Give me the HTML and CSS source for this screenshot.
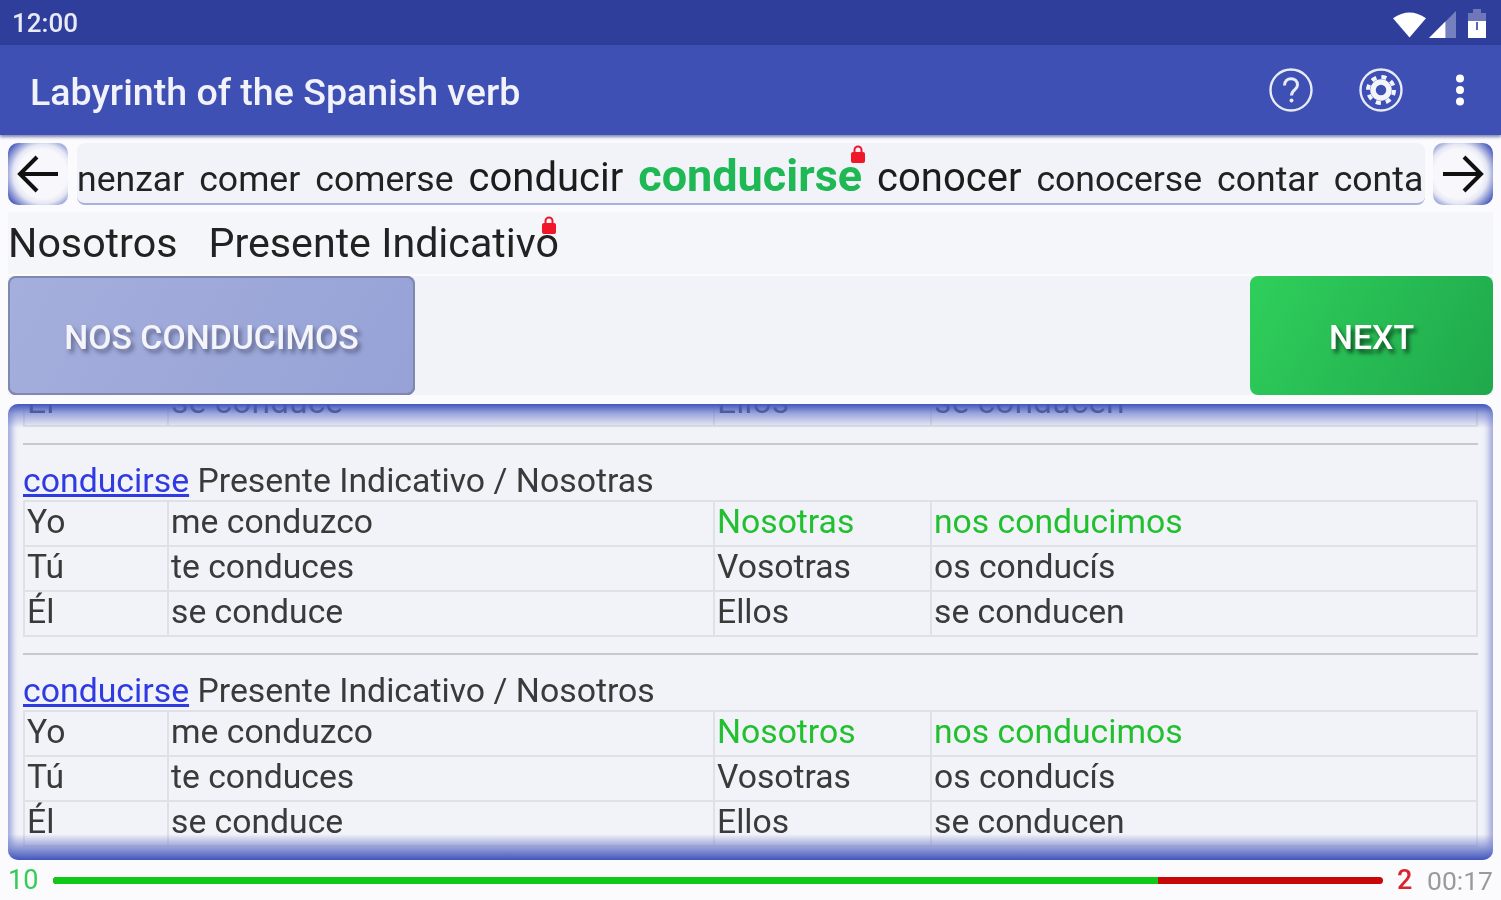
FILE: index.html
```html
<!DOCTYPE html>
<html lang="en">
<head>
<meta charset="utf-8">
<title>Labyrinth of the Spanish verb</title>
<link rel="stylesheet" href="styles.css">
</head>
<body>
<div class="status">
  <span class="clock">12:00</span>
  <div class="status-icons">
    <svg class="i-wifi" viewBox="0 0 34 26"><path d="M0 6Q17-6 34 6L17 26Z" fill="#fff"/></svg>
    <svg class="i-signal" viewBox="0 0 28 28"><path d="M0 28L28 0V28Z" fill="#fff" opacity=".35"/><path d="M0 28L17 11V28Z" fill="#fff"/></svg>
    <svg class="i-batt" viewBox="0 0 18 30"><path d="M5 1h8v4h5v25H0V5h5Z" fill="#fff" opacity=".3"/><path d="M0 13h18v17H0Z" fill="#fff"/><path d="M9 14v8" stroke="#5566bb" stroke-width="2"/></svg>
  </div>
</div>
<header class="appbar">
  <h1 class="title">Labyrinth of the Spanish verb</h1>
  <div class="actions">
    <svg class="act" viewBox="0 0 44 44"><circle cx="22" cy="22" r="20.500" fill="none" stroke="#e8eaf6" stroke-width="2.400"/><path d="M15.500 17.500c0-9 13-9 13-.5 0 5-6 5-6 10.500" fill="none" stroke="#e8eaf6" stroke-width="3"/><circle cx="22.500" cy="32.500" r="2" fill="#e8eaf6"/></svg>
    <svg class="act" viewBox="0 0 44 44"><circle cx="22" cy="22" r="20.500" fill="none" stroke="#e8eaf6" stroke-width="2.400"/><circle cx="22" cy="22" r="8" fill="none" stroke="#f4f5fb" stroke-width="5.500"/><circle cx="22" cy="22" r="13" fill="none" stroke="#f4f5fb" stroke-width="4" stroke-dasharray="5.105 5.105"/></svg>
    <svg class="more" viewBox="0 0 10 32"><circle cx="5" cy="4.500" r="4" fill="#fff"/><circle cx="5" cy="16" r="4" fill="#fff"/><circle cx="5" cy="27.500" r="4" fill="#fff"/></svg>
  </div>
</header>
<main class="page">
  <div class="word-row">
    <button class="nav nav-left" aria-label="Previous"><svg viewBox="0 0 44 40"><path d="M42 20H4M21 3L4 20l17 17" fill="none" stroke="#111" stroke-width="4"/></svg></button>
    <div class="strip">
      <div class="strip-inner">
        <span class="w">nenzar</span><span class="w">comer</span><span class="w">comerse</span><span class="w big">conducir</span><span class="w cur">conducirse<svg class="lock lock-a" viewBox="0 0 14 18"><path d="M3.500 8V5a3.500 3.500 0 017 0v3" fill="none" stroke="#f01828" stroke-width="2"/><rect y="7" width="14" height="11" rx="2" fill="#f01828"/></svg></span><span class="w big">conocer</span><span class="w">conocerse</span><span class="w">contar</span><span class="w">conta</span>
      </div>
    </div>
    <button class="nav nav-right" aria-label="Next"><svg viewBox="0 0 44 40"><path d="M2 20h38M23 3l17 17-17 17" fill="none" stroke="#111" stroke-width="4"/></svg></button>
  </div>
  <div class="meta-row">
    <span class="chip">Nosotros</span>
    <span class="chip tense">Presente Indicativo<svg class="lock lock-b" viewBox="0 0 14 18"><path d="M3.500 8V5a3.500 3.500 0 017 0v3" fill="none" stroke="#f01828" stroke-width="2"/><rect y="7" width="14" height="11" rx="2" fill="#f01828"/></svg></span>
  </div>
  <div class="btn-row">
    <button class="btn answer">NOS CONDUCIMOS</button>
    <button class="btn next">NEXT</button>
  </div>
  <section class="scroller">
    <div class="scroll-inner">
      <table class="conj clipped">
        <tr><td>Él</td><td>se conduce</td><td>Ellos</td><td>se conducen</td></tr>
      </table>
      <hr class="sep">
      <p class="head"><a href="#">conducirse</a> Presente Indicativo / Nosotras</p>
      <table class="conj">
        <tr><td>Yo</td><td>me conduzco</td><td class="ok">Nosotras</td><td class="ok">nos conducimos</td></tr>
        <tr><td>Tú</td><td>te conduces</td><td>Vosotras</td><td>os conducís</td></tr>
        <tr><td>Él</td><td>se conduce</td><td>Ellos</td><td>se conducen</td></tr>
      </table>
      <hr class="sep">
      <p class="head"><a href="#">conducirse</a> Presente Indicativo / Nosotros</p>
      <table class="conj">
        <tr><td>Yo</td><td>me conduzco</td><td class="ok">Nosotros</td><td class="ok">nos conducimos</td></tr>
        <tr><td>Tú</td><td>te conduces</td><td>Vosotras</td><td>os conducís</td></tr>
        <tr><td>Él</td><td>se conduce</td><td>Ellos</td><td>se conducen</td></tr>
      </table>
    </div>
    <div class="fade fade-top"></div>
    <div class="fade fade-bottom"></div>
  </section>
  <footer class="progress">
    <span class="n-ok">10</span>
    <div class="bar"><div class="bar-ok" style="width:83.100%"></div></div>
    <span class="n-bad">2</span>
    <span class="time">00:17</span>
  </footer>
</main>
</body>
</html>
```
FILE: styles.css
```css
* { box-sizing: border-box; }
html, body { margin: 0; height: 900px; overflow: hidden; }
body { width: 1501px; background: #fbfbfd; font-family: Roboto, "Liberation Sans", sans-serif; color: #2b2b2b; filter: blur(.6px); }

.status { height: 45px; background: #2f3d9b; display: flex; align-items: center; justify-content: space-between; padding: 0 15px 0 12px; }
.clock { color: #e8eaf6; font-size: 26px; font-weight: 500; }
.status-icons { display: flex; align-items: flex-end; gap: 4px; }
.i-wifi { width: 33px; height: 26px; margin-right: -1px; }
.i-signal { width: 27px; height: 27px; }
.i-batt { width: 18px; height: 30px; margin-left: 8px; }

.appbar { height: 90px; background: #3e50b4; display: flex; align-items: center; justify-content: space-between; padding: 6px 36px 0 30px; box-shadow: 0 2px 3px rgba(40,50,120,.6); position: relative; }
.title { margin: 0; color: #f1f2fa; font-size: 37.600px; font-weight: 500; line-height: 1; }
.actions { display: flex; align-items: center; margin-top: -6px; }
.act { width: 44px; height: 44px; display: block; margin-right: 46px; }
.act + .act { margin-right: 52px; }
.more { width: 10px; height: 32px; display: block; }

.page { padding: 8px 8px 0; }
.word-row { height: 62px; display: flex; align-items: stretch; gap: 8px; }
.nav { width: 60px; height: 62px; flex: none; padding: 0; border: 0; border-radius: 10px; display: flex; align-items: center; justify-content: center; }
.nav-left { background: radial-gradient(circle at 58% 50%, #f8f8fc 0 52%, #e4e6f3 64%, #4a5cbc 90%); }
.nav-right { background: radial-gradient(circle at 42% 50%, #f8f8fc 0 52%, #e4e6f3 64%, #4a5cbc 90%); }
.nav svg { width: 44px; height: 40px; display: block; }
.strip { flex: 1; min-width: 0; overflow: hidden; background: #f2f3f9; border-bottom: 2px solid #a9b1df; border-radius: 8px; margin-left: 1px; }
.strip-inner { display: flex; align-items: baseline; gap: 15px; height: 100%; white-space: nowrap; padding-top: 11px; }
.w { font-size: 35.600px; color: #222; line-height: 44px; }
.big { font-size: 40px; color: #1c1c1c; }
.cur { font-size: 45px; font-weight: 700; color: #1eb954; position: relative; }
.lock { position: absolute; display: block; width: 14px; height: 18px; }
.lock-a { right: -3px; top: -9px; }
.lock-b { right: 3px; top: 4px; }

.meta-row { height: 62px; margin-top: 7px; display: flex; gap: 31px; background: #f5f6fa; }
.chip { font-size: 41.200px; line-height: 62px; color: #222; position: relative; }

.btn-row { display: flex; justify-content: space-between; margin-top: 2px; background: #f2f3f8; }
.btn { height: 119px; border: 0; border-radius: 8px; color: #fff; font: 500 33.800px Roboto, sans-serif; padding: 4px 0 0; }
.answer { width: 407px; background: linear-gradient(120deg, #a5afdd, #96a2d6); box-shadow: inset 0 0 0 2px #8088b0, inset 0 -2px 0 #707aa8; text-shadow: 3px 4px 4px rgba(40,40,70,.5); color: #f4f5fb; }
.next { width: 243px; background: linear-gradient(120deg, #2fcf5b, #1fa84c); text-shadow: 3px 4px 4px rgba(0,0,0,.6); }

.scroller { position: relative; height: 456px; margin-top: 9px; overflow: hidden; background: #f2f3f9; border-radius: 10px; box-shadow: inset 6px 0 6px -2px rgba(90,105,195,.55), inset -6px 0 6px -2px rgba(90,105,195,.55); }
.scroll-inner { padding: 0 15px; margin-top: -24px; }
.sep { border: 0; border-top: 2px solid #c8c8cc; margin: 0; }
.clipped + .sep { margin-top: 13px; }
.head { margin: 14px 0 0; font-size: 33.800px; line-height: 44px; color: #3a3a3a; height: 41px; }
.head a { color: #2f3be0; }
.conj { width: 100%; border-collapse: collapse; table-layout: fixed; font-size: 33.700px; color: #3a3a3a; border: 2px solid #e0e1e6; }
.conj td { border: 2px solid #e0e1e6; height: 45px; padding: 0 0 4px 2px; line-height: 39px; white-space: nowrap; overflow: hidden; }
.conj td:nth-child(1) { width: 144px; }
.conj td:nth-child(2) { width: 546px; }
.conj td:nth-child(3) { width: 217px; }
.conj .ok { color: #22c02f; }
.conj + .sep { margin-top: 16px; }
.fade { position: absolute; left: 0; right: 0; pointer-events: none; }
.fade-top { top: 0; height: 24px; background: linear-gradient(#4357bd, rgba(100,115,200,.6) 40%, rgba(240,241,249,0)); }
.fade-bottom { bottom: 0; height: 26px; background: linear-gradient(rgba(240,241,249,0), rgba(120,132,205,.8) 55%, #4357bd); }

.progress { height: 40px; display: flex; align-items: center; }
.n-ok { font-size: 27px; color: #33cc55; width: 45px; }
.bar { width: 1331px; height: 7px; background: #c80808; border-radius: 4px; overflow: hidden; }
.bar-ok { height: 100%; background: #10c818; }
.n-bad { font-size: 27px; font-weight: 500; color: #d8242c; margin-left: 14px; width: 30px; }
.time { font-size: 26.500px; color: #9a9a9a; }
```
